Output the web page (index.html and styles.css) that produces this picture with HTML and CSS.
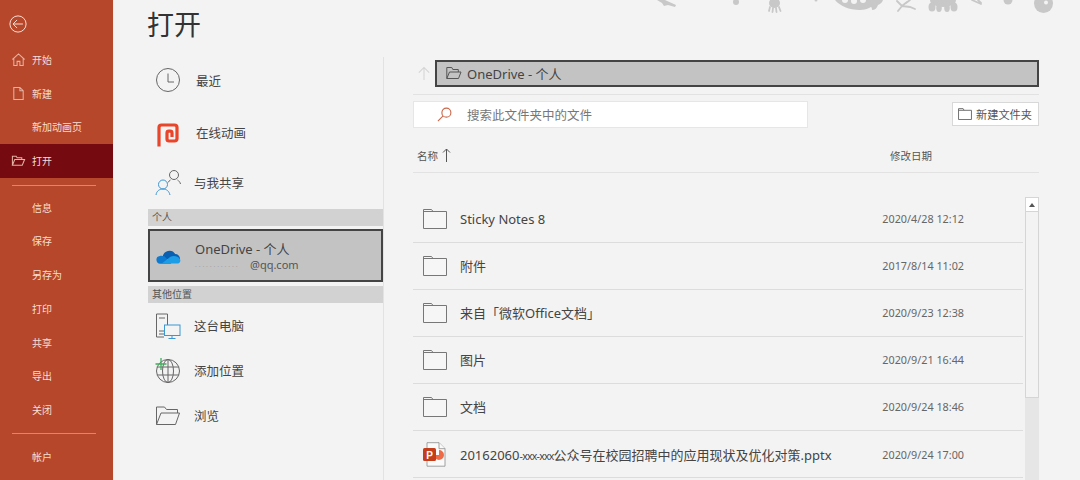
FILE: index.html
```html
<!DOCTYPE html>
<html lang="zh">
<head>
<meta charset="utf-8">
<title>打开</title>
<link rel="stylesheet" href="styles.css">
</head>
<body>
<div class="app">
  <nav class="side">
    <svg class="back" viewBox="0 0 20 20"><circle cx="10" cy="10" r="9"/><path d="M15.500 10H4.500M9 5.500L4.500 10 9 14.500"/></svg>
    <ul class="nav first">
      <li><svg class="nico" viewBox="0 0 16 16"><path d="M1.500 8L8 2l6.500 6M3 7v7.500h3.500V10h3v4.500H13V7"/></svg>开始</li>
      <li><svg class="nico" viewBox="0 0 16 16"><path d="M3 1.500h6.500L13 5v9.500H3zM9.500 1.500V5H13"/></svg>新建</li>
      <li>新加动画页</li>
      <li class="on"><svg class="nico" viewBox="0 0 16 16"><path d="M1.500 13V3.500h4l1 1.500h5v2M1.500 13h10.500l2.500-6H4z"/></svg>打开</li>
    </ul>
    <hr class="rule">
    <ul class="nav">
      <li>信息</li><li>保存</li><li>另存为</li><li>打印</li><li>共享</li><li>导出</li><li>关闭</li>
    </ul>
    <hr class="rule low">
    <ul class="nav"><li>帐户</li></ul>
  </nav>

  <main class="main">
    <svg class="deco" viewBox="0 0 420 16">
      <path d="M17 0h8l11 5-1 2-7-2-4 1-2-3z"/>
      <circle cx="96" cy="2" r="3"/>
      <ellipse cx="134.500" cy="3" rx="5.500" ry="5"/>
      <path class="leg" d="M130 7l-1 4M133 8l-.5 4M136 8l.5 4M139 7l1.500 4"/>
      <circle cx="176" cy="0" r="1.500"/>
      <path d="M195 0h48c-1 3-3 4-5 5-1 3-3 5-6 5 0-2-.5-3-1-3-3 2-7 3-11 3-11 0-20-4-25-10z"/>
      <circle class="hole" cx="205" cy="0" r="3"/><circle class="hole" cx="214" cy="1" r="3"/><circle class="hole" cx="223" cy="0" r="3"/>
      <path class="leg" d="M257 1l5 5 5-4M262 6l-4 5M262 6l8 1 5 2M266 3l4-3"/>
      <ellipse cx="303" cy="0" rx="13" ry="7"/>
      <ellipse cx="292" cy="7" rx="3.500" ry="4.500"/><ellipse cx="299" cy="8" rx="2.800" ry="4"/><ellipse cx="307" cy="8" rx="2.800" ry="4"/><ellipse cx="314" cy="7" rx="3.500" ry="4.500"/>
      <path class="leg" d="M332 0l9 4M338 0l3 3"/>
      <circle cx="368" cy="0" r="4.500"/>
      <circle cx="403.500" cy="3.500" r="9.500"/><circle class="hole" cx="406" cy="2.500" r="2"/>
    </svg>
    <h1 class="title">打开</h1>
    <div class="cols">
      <section class="places">
        <div class="place h-recent">
          <svg class="pico" viewBox="0 0 26 26"><circle cx="13" cy="13" r="11.500"/><path d="M13 6.500V15h6"/></svg>
          <span class="plabel">最近</span>
        </div>
        <div class="place h-online">
          <svg class="pico down" viewBox="0 0 26 26"><path class="red" d="M4 24.500V5.500a2.500 2.500 0 0 1 2.500-2.500h13A2.500 2.500 0 0 1 22 5.500v11a2.500 2.500 0 0 1-2.500 2.500h-5.500A2 2 0 0 1 12 17V11a1.800 1.800 0 0 1 1.800-1.800h1.400a1.800 1.800 0 0 1 1.800 1.800v4"/></svg>
          <span class="plabel">在线动画</span>
        </div>
        <div class="place h-shared">
          <svg class="pico" viewBox="0 0 26 26"><circle class="blue" cx="8" cy="15.500" r="4.500"/><path class="blue" d="M1 26c.5-4 3.500-6 7-6s6 2 7 6"/><circle cx="19" cy="6" r="4.500"/><path d="M15.500 11c-1 .5-2 1.500-2.500 2.500M22.500 11c1.500 1 2.500 2 3 4"/></svg>
          <span class="plabel tight">与我共享</span>
        </div>
        <div class="ghead">个人</div>
        <div class="onedrive">
          <svg class="cloud" viewBox="0 0 26 16"><path class="cl1" d="M7 9a7 7 0 0 1 13-3 5 5 0 0 1 5 5H8z"/><path class="cl2" d="M5 16a4 4 0 0 1-1-8c1-.5 3-.5 5 .5l7 7.500z"/><path class="cl3" d="M6 15.800l9-7c3-1.500 8-1 10 2.500 1 2-.500 4.500-3 4.500z"/></svg>
          <div class="odtext">
            <div class="odname">OneDrive - 个人</div>
            <div class="odmail"><span class="dots">. . . . . . . . . . . .</span>@qq.com</div>
          </div>
        </div>
        <div class="ghead">其他位置</div>
        <div class="place h-pc">
          <svg class="pico" viewBox="0 0 26 26"><path d="M9 25H1.500V2h11v11M4 6h6M4 19h5M4 22h5"/><rect class="blue" x="9.500" y="13" width="15.500" height="10.500"/><path class="blue" d="M17 23.500v3M13.500 26.500h7"/></svg>
          <span class="plabel tight">这台电脑</span>
        </div>
        <div class="place h-add">
          <svg class="pico" viewBox="0 0 26 26"><circle cx="13" cy="14" r="11.500"/><ellipse cx="13" cy="14" rx="5.500" ry="11.500"/><path d="M2 10h22M2 18h22M13 2.500v23"/><path class="green" d="M6 1v12M.500 7h11"/></svg>
          <span class="plabel tight">添加位置</span>
        </div>
        <div class="place h-browse">
          <svg class="pico" viewBox="0 0 26 26"><path d="M1.500 22.500V5h8l2 2.500h11V11M1.500 22.500h19l4-11.500H6z"/></svg>
          <span class="plabel tight">浏览</span>
        </div>
      </section>

      <section class="files">
        <div class="pathrow">
          <svg class="up" viewBox="0 0 14 16"><path d="M7 15.500V1M1 7l6-6 6 6"/></svg>
          <div class="path">
            <svg class="pathico" viewBox="0 0 16 14"><path d="M.800 12.500V1.500h5l1 2h5.500V6M.800 12.500h11.700l2.500-6.500H3.500z"/></svg>
            <span>OneDrive - 个人</span>
          </div>
        </div>
        <div class="searchrow">
          <div class="search">
            <svg class="mag" viewBox="0 0 16 16"><circle cx="10" cy="6" r="4.800"/><path d="M6.500 9.500L1 15"/></svg>
            <span>搜索此文件夹中的文件</span>
          </div>
          <button class="newfolder">
            <svg class="nfico" viewBox="0 0 15 13"><path d="M.500 12.500V.700h5l1 1.800h8v10z M.500 2.500h6"/></svg>新建文件夹
          </button>
        </div>
        <div class="thead">
          <span class="tname">名称<svg class="sort" viewBox="0 0 9 14"><path d="M4.500 14V1M1 4.500L4.500 1 8 4.500"/></svg></span>
          <span class="tdate">修改日期</span>
        </div>
        <div class="listwrap">
          <ul class="list">
            <li class="row"><svg class="fold" viewBox="0 0 24 20"><path d="M.500 19.500V.500h8l1.500 2H23.500v17zM.500 2.500h9.500"/></svg><span class="fname">Sticky Notes 8</span><span class="fdate">2020/4/28 12:12</span></li>
            <li class="row"><svg class="fold" viewBox="0 0 24 20"><path d="M.500 19.500V.500h8l1.500 2H23.500v17zM.500 2.500h9.500"/></svg><span class="fname">附件</span><span class="fdate">2017/8/14 11:02</span></li>
            <li class="row"><svg class="fold" viewBox="0 0 24 20"><path d="M.500 19.500V.500h8l1.500 2H23.500v17zM.500 2.500h9.500"/></svg><span class="fname">来自「微软Office文档」</span><span class="fdate">2020/9/23 12:38</span></li>
            <li class="row"><svg class="fold" viewBox="0 0 24 20"><path d="M.500 19.500V.500h8l1.500 2H23.500v17zM.500 2.500h9.500"/></svg><span class="fname">图片</span><span class="fdate">2020/9/21 16:44</span></li>
            <li class="row"><svg class="fold" viewBox="0 0 24 20"><path d="M.500 19.500V.500h8l1.500 2H23.500v17zM.500 2.500h9.500"/></svg><span class="fname">文档</span><span class="fdate">2020/9/24 18:46</span></li>
            <li class="row"><svg class="fold ppt" viewBox="0 0 24 25"><path class="pg" d="M4 .700h12l6 6v17.500H4z"/><path class="pg" d="M16 .700v6h6"/><path class="slice" d="M16 8a5 5 0 1 1-5 5h5z"/><rect class="pbox" x="0" y="6" width="13" height="13" rx="1.500"/><text class="pletter" x="6.500" y="16.500">P</text></svg><span class="fname">20162060<span class="redact">-xxx-xxx</span>公众号在校园招聘中的应用现状及优化对策.pptx</span><span class="fdate">2020/9/24 17:00</span></li>
          </ul>
          <div class="scroll">
            <div class="sbtn"><i class="tri"></i></div>
            <div class="thumb"></div>
          </div>
        </div>
      </section>
    </div>
  </main>
</div>
</body>
</html>
```
FILE: styles.css
```css
* { box-sizing: border-box; }
html, body { margin: 0; height: 100%; overflow: hidden; }
body { font-family: "Noto Sans CJK SC", "Noto Sans", sans-serif; background: #f3f3f3; color: #444; }
ul { list-style: none; margin: 0; padding: 0; }
.app { display: flex; width: 1080px; height: 480px; overflow: hidden; }

.side { width: 114px; flex: none; height: 480px; background: #b7472a; border-right: 1px solid #f7e9e4; color: #f6dfd7; font-size: 10px; }
.back { display: block; width: 18px; height: 18px; margin: 15px 0 0 9px; fill: none; stroke: #f6dfd7; stroke-width: 1.100; }
.nav li { position: relative; height: 33.700px; line-height: 33.700px; padding-left: 32px; white-space: nowrap; }
.nav.first { margin-top: 10px; }
.nav .on { background: #750b11; }
.nico { position: absolute; left: 11px; top: 9px; width: 15px; height: 15px; fill: none; stroke: #e3b3a4; stroke-width: 1.100; }
.rule { border: 0; height: 1px; background: #d98672; margin: 7px 17px 5px 12px; }
.rule.low { margin-top: 6px; margin-bottom: 6px; }

.main { position: relative; flex: 1; padding: 0 41px 0 34px; }
.deco { position: absolute; left: 526px; top: 0; width: 420px; height: 16px; fill: #c8c8c8; }
.deco .hole { fill: #f3f3f3; }
.deco .leg { fill: none; stroke: #c8c8c8; stroke-width: 1.800; stroke-linecap: round; }
.title { margin: 0 0 0 -1px; height: 57px; padding-top: 4px; font-size: 27px; line-height: 40px; font-weight: 400; color: #333; }
.cols { display: flex; height: 423px; }

.places { width: 236px; flex: none; border-right: 1px solid #e2e2e2; color: #444; }
.place { display: flex; align-items: center; padding-left: 7px; }
.pico { width: 26px; height: 26px; flex: none; fill: none; stroke: #666; stroke-width: 1; overflow: visible; }
.pico.down { margin-top: 6px; }
.pico .blue { stroke: #3b97d3; }
.pico .green { stroke: #3fae5a; stroke-width: 1.300; }
.pico .red { stroke: #e8452a; stroke-width: 3.200; }
.plabel { margin-left: 15px; font-size: 12.500px; }
.plabel.tight { margin-left: 13px; }
.h-recent { height: 46px; }
.h-online { height: 58px; }
.h-shared { height: 48px; padding-bottom: 6px; }
.ghead { width: 235px; height: 17px; line-height: 16px; background: #d2d2d2; padding-left: 4px; font-size: 10px; color: #555; }
.onedrive { display: flex; align-items: center; width: 235px; height: 53px; margin: 3px 0 4px; padding-left: 6px; background: #c3c3c3; border: 2px solid #444; }
.cloud { width: 25px; height: 16px; flex: none; }
.cl1 { fill: #0a5fb0; }
.cl2 { fill: #0f7bd0; }
.cl3 { fill: #1d9de6; }
.odtext { margin-left: 14px; }
.odname { font-size: 13px; line-height: 18px; color: #444; font-family: "Noto Sans", "Noto Sans CJK SC", sans-serif; }
.odmail { font-size: 11px; line-height: 14px; color: #555; font-family: "Noto Sans", sans-serif; white-space: nowrap; }
.dots { display: inline-block; width: 55px; vertical-align: bottom; color: #a6a6a6; font-size: 7px; white-space: pre; }
.h-pc { height: 46px; padding-bottom: 2px; }
.h-add { height: 44px; padding-bottom: 2px; }
.h-browse { height: 46px; padding-bottom: 2px; }

.files { flex: 1; min-width: 0; padding-left: 29px; }
.pathrow { display: flex; align-items: center; height: 38px; padding-bottom: 5px; border-bottom: 1px solid #e2e2e2; }
.up { width: 12px; height: 15px; margin: 0 5px; flex: none; fill: none; stroke: #d4d4d4; stroke-width: 1.200; }
.path { flex: 1; display: flex; align-items: center; height: 27px; padding-left: 9px; background: #c3c3c3; border: 2px solid #444; font-size: 13px; color: #444; font-family: "Noto Sans", "Noto Sans CJK SC", sans-serif; }
.pathico { width: 16px; height: 14px; margin-right: 5px; fill: none; stroke: #555; stroke-width: 1; }
.searchrow { display: flex; justify-content: space-between; align-items: center; height: 38px; }
.search { display: flex; align-items: center; width: 395px; height: 27px; background: #fff; border: 1px solid #e6e6e6; font-size: 12.500px; color: #777; }
.mag { width: 15px; height: 15px; margin: 0 15px 0 23px; fill: none; stroke: #c9684c; stroke-width: 1.200; }
.newfolder { display: flex; align-items: center; width: 87px; height: 24px; padding: 0 0 0 5px; background: #fff; border: 1px solid #d8d8d8; font: inherit; font-size: 11.200px; color: #555; }
.nfico { width: 14px; height: 12px; margin-right: 4px; fill: none; stroke: #666; stroke-width: 1; }
.thead { display: flex; align-items: center; height: 40px; padding-top: 5px; border-bottom: 1px solid #e2e2e2; font-size: 10.500px; color: #555; }
.tname { display: flex; align-items: center; padding-left: 4px; }
.sort { width: 9px; height: 14px; margin-left: 4px; fill: none; stroke: #555; stroke-width: 1; }
.tdate { margin-left: auto; margin-right: 107px; }

.listwrap { position: relative; padding-top: 22.500px; }
.list { width: 610px; }
.row { display: flex; align-items: center; height: 47.100px; border-bottom: 1px solid #dcdcdc; padding-left: 10px; }
.fold { width: 24px; height: 20px; flex: none; fill: #f6f6f6; stroke: #777; stroke-width: 1; }
.ppt { height: 25px; }
.pg { fill: #fafafa; stroke: #8a8a8a; stroke-width: .8; }
.slice { fill: #ed6c47; stroke: none; }
.pbox { fill: #c43e1c; stroke: none; }
.pletter { fill: #fff; stroke: none; font: 700 10px "Liberation Sans", sans-serif; text-anchor: middle; }
.fname { margin-left: 13px; font-size: 13px; color: #444; white-space: nowrap; font-family: "Noto Sans", "Noto Sans CJK SC", sans-serif; }
.redact { font-size: 10.500px; letter-spacing: -.75px; }
.fdate { margin-left: auto; margin-right: 59px; font-size: 10.800px; color: #666; white-space: nowrap; font-family: "Noto Sans", sans-serif; }
.scroll { position: absolute; right: 0; top: 24px; width: 14px; height: 300px; background: #e6e6e6; }
.sbtn { display: flex; align-items: center; justify-content: center; height: 15px; background: #fff; border: 1px solid #d5d5d5; }
.tri { display: block; width: 0; height: 0; border: 3.500px solid transparent; border-top: 0; border-bottom: 4px solid #555; }
.thumb { height: 186px; background: #f3f3f3; border: 1px solid #d5d5d5; border-top: 0; }
```
